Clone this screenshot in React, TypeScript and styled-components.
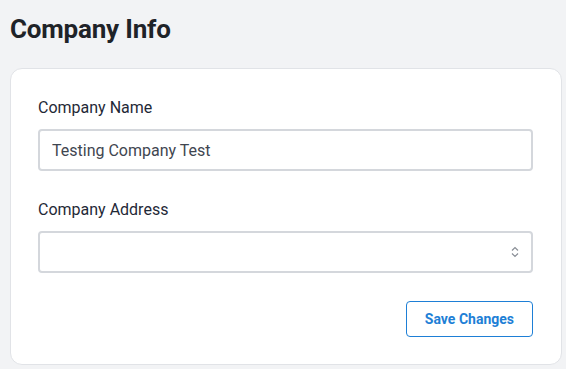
import React from 'react';
import styled, { createGlobalStyle } from 'styled-components';

const GlobalStyle = createGlobalStyle`
	html, body {
		margin: 0;
		padding: 0;
		background: #f2f3f5;
		font-family: Roboto, 'Liberation Sans', Arial, sans-serif;
	}
`;

const Page = styled.main`
	padding: 12px 4px 0 10px;
	width: 552px;
`;

const Title = styled.h1`
	margin: 0 0 22px;
	font-size: 26px;
	line-height: 34px;
	font-weight: 700;
	color: #1f2328;
	letter-spacing: -0.2px;
`;

const Card = styled.section`
	background: #ffffff;
	border: 1px solid #e1e3e7;
	border-radius: 12px;
	padding: 29px 28px 27px 27px;
	display: flex;
	flex-direction: column;
`;

const Field = styled.div`
	display: flex;
	flex-direction: column;
	gap: 11px;
	margin-bottom: 29px;
`;

const Label = styled.label`
	font-size: 16px;
	line-height: 20px;
	color: #1f2937;
`;

const Input = styled.input`
	box-sizing: border-box;
	height: 42px;
	width: 100%;
	border: 2px solid #d4d7dc;
	border-radius: 4px;
	padding: 0 12px;
	font-family: inherit;
	font-size: 16px;
	color: #3f4650;
	background: #fff;
	outline: none;
`;

const SelectBox = styled.div`
	box-sizing: border-box;
	height: 42px;
	border: 2px solid #d4d7dc;
	border-radius: 4px;
	display: flex;
	align-items: center;
	justify-content: flex-end;
	padding-right: 12px;
	color: #8a8f97;
`;

const Actions = styled.div`
	display: flex;
	justify-content: flex-end;
	margin-top: -1px;
`;

const Button = styled.button`
	box-sizing: border-box;
	height: 36px;
	padding: 0 18px;
	background: #fff;
	border: 1px solid #1e7fd6;
	border-radius: 4px;
	color: #1e7fd6;
	font-family: inherit;
	font-weight: 700;
	font-size: 14px;
	cursor: pointer;
`;

const Chevrons = () => (
	<svg width='8' height='12' viewBox='0 0 8 12' fill='none' stroke='currentColor' strokeWidth='1.2'>
		<path d='M1 4.5 L4 1.5 L7 4.5' />
		<path d='M1 7.5 L4 10.5 L7 7.5' />
	</svg>
);

const App = () => {
	const [name, setName] = React.useState('Testing Company Test');

	return (
		<>
			<GlobalStyle />
			<Page>
				<Title>Company Info</Title>
				<Card>
					<Field>
						<Label>Company Name</Label>
						<Input value={name} onChange={(e) => setName(e.target.value)} />
					</Field>
					<Field>
						<Label>Company Address</Label>
						<SelectBox>
							<Chevrons />
						</SelectBox>
					</Field>
					<Actions>
						<Button>Save Changes</Button>
					</Actions>
				</Card>
			</Page>
		</>
	);
};

export default App;
